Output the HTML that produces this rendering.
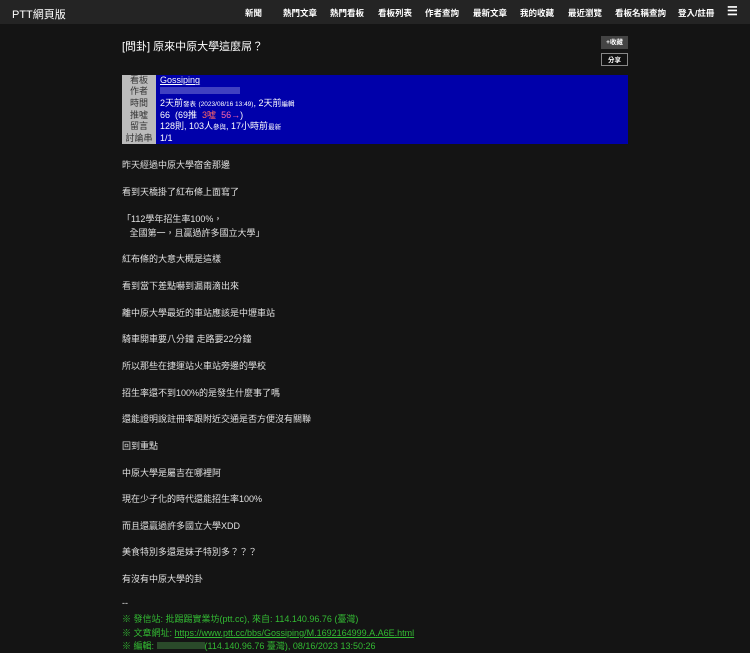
<!DOCTYPE html>
<html><head><meta charset="utf-8"><style>
*{margin:0;padding:0;box-sizing:border-box}
body{width:750px;height:653px;overflow:hidden;background:#141414;color:#ddd;font-family:"Liberation Sans","Noto Sans CJK TC",sans-serif;font-size:9px;position:relative}
.nav{position:absolute;left:0;top:0;width:750px;height:24px;background:#242424;color:#fff;}
.nav .logo{position:absolute;left:12px;top:6px;font-size:11px}
.nav span{position:absolute;top:7px;font-size:8.5px;font-weight:bold}
.title{position:absolute;left:122px;top:38px;font-size:11px;color:#fff}
.btn{position:absolute;left:601px;width:27px;height:13px;font-size:6.5px;color:#fff;text-align:center;line-height:13px;font-weight:bold}
table{position:absolute;left:122px;top:75px;width:506px;height:68px;border-collapse:collapse;background:#0000aa;table-layout:fixed}
td{height:11.3px;line-height:11px;font-size:9px;color:#fff;padding:0;overflow:hidden;white-space:nowrap}
td.k{width:34px;background:#bbb;color:#333;text-align:center}
td.v{padding-left:4px}
small{font-size:6.5px}
.p{position:absolute;left:122px;color:#e0e0e0;font-size:9px}
.g{color:#3b3;}
.g a{color:#3b3;text-decoration:underline}
</style></head><body>
<div class="nav"><div class="logo">PTT網頁版</div>
<span style="left:245px">新聞</span><span style="left:283px">熱門文章</span><span style="left:330px">熱門看板</span><span style="left:378px">看板列表</span><span style="left:425px">作者查詢</span><span style="left:473px">最新文章</span><span style="left:520px">我的收藏</span><span style="left:568px">最近瀏覽</span><span style="left:615px">看板名稱查詢</span><span style="left:678px">登入/註冊</span><span style="left:727px;top:4px;font-size:12px">☰</span></div>
<div class="title">[問卦] 原來中原大學這麼屌？</div>
<div class="btn" style="top:36px;background:#444">+收藏</div>
<div class="btn" style="top:53px;border:1px solid #888;background:#111">分享</div>
<table>
<tr><td class="k">看板</td><td class="v"><u>Gossiping</u></td></tr>
<tr><td class="k">作者</td><td class="v"><span style="display:inline-block;width:80px;height:7px;background:#6a6ad0;opacity:.6"></span></td></tr>
<tr><td class="k">時間</td><td class="v">2天前<small>發表</small> <small>(2023/08/16 13:49)</small>, 2天前<small>編輯</small></td></tr>
<tr><td class="k">推噓</td><td class="v">66 &nbsp;(69推 &nbsp;<span style="color:#f66">3噓</span> &nbsp;<span style="color:#f6a">56→</span>)</td></tr>
<tr><td class="k">留言</td><td class="v">128則, 103人<small>參與</small>, 17小時前<small>最新</small></td></tr>
<tr><td class="k">討論串</td><td class="v">1/1</td></tr>
</table>
<div class="p" style="top:158px">昨天經過中原大學宿舍那邊</div>
<div class="p" style="top:185px">看到天橋掛了紅布條上面寫了</div>
<div class="p" style="top:212px">「112學年招生率100%，</div>
<div class="p" style="top:226px">&nbsp;&nbsp;&nbsp;全國第一，且贏過許多國立大學」</div>
<div class="p" style="top:252px">紅布條的大意大概是這樣</div>
<div class="p" style="top:279px">看到當下差點嚇到漏兩滴出來</div>
<div class="p" style="top:306px">離中原大學最近的車站應該是中壢車站</div>
<div class="p" style="top:332px">騎車開車要八分鐘 走路要22分鐘</div>
<div class="p" style="top:359px">所以那些在捷運站火車站旁邊的學校</div>
<div class="p" style="top:386px">招生率還不到100%的是發生什麼事了嗎</div>
<div class="p" style="top:412px">還能證明說註冊率跟附近交通是否方便沒有關聯</div>
<div class="p" style="top:439px">回到重點</div>
<div class="p" style="top:466px">中原大學是屬吉在哪裡阿</div>
<div class="p" style="top:492px">現在少子化的時代還能招生率100%</div>
<div class="p" style="top:519px">而且還贏過許多國立大學XDD</div>
<div class="p" style="top:545px">美食特別多還是妹子特別多？？？</div>
<div class="p" style="top:572px">有沒有中原大學的卦</div>
<div class="p" style="top:598px">--</div>
<div class="p g" style="top:612px">※ 發信站: 批踢踢實業坊(ptt.cc), 來自: 114.140.96.76 (臺灣)</div>
<div class="p g" style="top:626px">※ 文章網址: <a>https://www.ptt.cc/bbs/Gossiping/M.1692164999.A.A6E.html</a></div>
<div class="p g" style="top:639px">※ 編輯: <span style="display:inline-block;width:48px;height:7px;background:#2a4a2a"></span>(114.140.96.76 臺灣), 08/16/2023 13:50:26</div>
</body></html>
